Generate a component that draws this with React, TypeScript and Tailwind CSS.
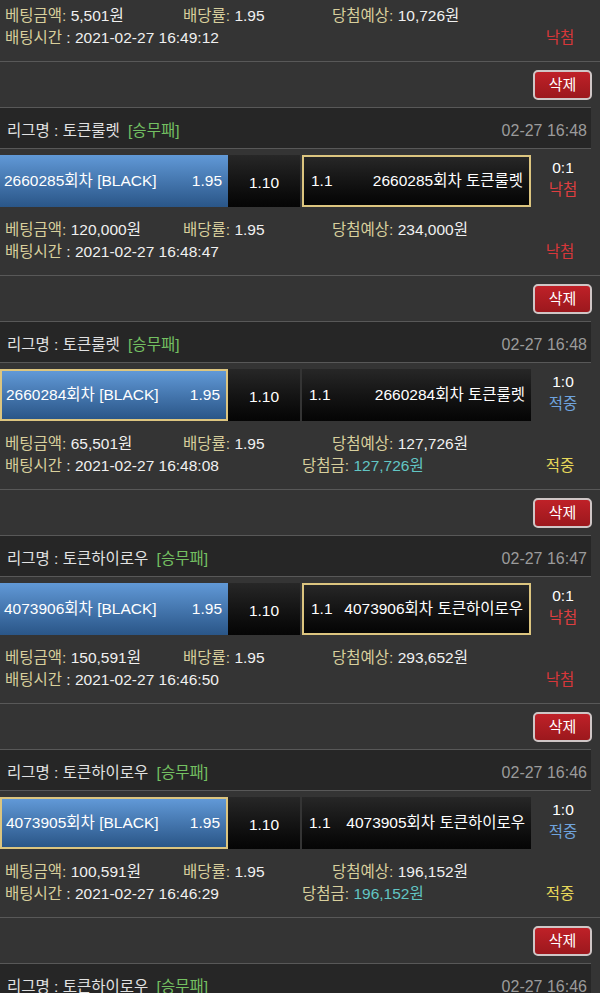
import React from 'react';

type Bet = {
  league?: string;
  time?: string;
  round?: string;
  pick?: 'home' | 'away';
  score?: string;
  win: boolean;
  amount: string;
  expect: string;
  betTime: string;
  prize?: string;
};

const bets: Bet[] = [
  { win: false, amount: '5,501원', expect: '10,726원', betTime: '2021-02-27 16:49:12' },
  {
    league: '토큰룰렛', time: '02-27 16:48', round: '2660285', pick: 'away', score: '0:1',
    win: false, amount: '120,000원', expect: '234,000원', betTime: '2021-02-27 16:48:47',
  },
  {
    league: '토큰룰렛', time: '02-27 16:48', round: '2660284', pick: 'home', score: '1:0',
    win: true, amount: '65,501원', expect: '127,726원', betTime: '2021-02-27 16:48:08', prize: '127,726원',
  },
  {
    league: '토큰하이로우', time: '02-27 16:47', round: '4073906', pick: 'away', score: '0:1',
    win: false, amount: '150,591원', expect: '293,652원', betTime: '2021-02-27 16:46:50',
  },
  {
    league: '토큰하이로우', time: '02-27 16:46', round: '4073905', pick: 'home', score: '1:0',
    win: true, amount: '100,591원', expect: '196,152원', betTime: '2021-02-27 16:46:29', prize: '196,152원',
  },
  {
    league: '토큰하이로우', time: '02-27 16:46', round: '4073904', pick: 'home', score: '1:0',
    win: true, amount: '100,000원', expect: '195,000원', betTime: '2021-02-27 16:46:08', prize: '195,000원',
  },
];

const Info = ({ bet }: { bet: Bet }) => (
  <div className="h-[68px] pl-[5px] pr-[5px] pt-[12px]">
    <div className="flex h-[22px] items-center">
      <span className="w-[178px]">
        <span className="text-[#d8cf9c]">베팅금액:</span> {bet.amount}
      </span>
      <span className="w-[149px]">
        <span className="text-[#d8cf9c]">배당률:</span> 1.95
      </span>
      <span>
        <span className="text-[#d8cf9c]">당첨예상:</span> {bet.expect}
      </span>
    </div>
    <div className="flex h-[22px] items-center">
      <span className="w-[297px]">
        <span className="text-[#d8cf9c]">배팅시간</span> : {bet.betTime}
      </span>
      {bet.prize && (
        <span>
          <span className="text-[#d8cf9c]">당첨금:</span>{' '}
          <span className="text-[#62c6c4]">{bet.prize}</span>
        </span>
      )}
      <span className={`ml-auto w-[70px] text-center ${bet.win ? 'text-[#e6d75a]' : 'text-[#d8373a]'}`}>
        {bet.win ? '적중' : '낙첨'}
      </span>
    </div>
  </div>
);

const DeleteBar = () => (
  <div className="flex h-[46px] justify-end border-t border-[#585858] pr-[8px] pt-[8px]">
    <button className="h-[30px] w-[59px] rounded-[5px] border-2 border-[#cfc6c6] bg-gradient-to-b from-[#bf2128] to-[#9c181d] text-[15px] text-white">
      삭제
    </button>
  </div>
);

const BetBlock = ({ bet }: { bet: Bet }) => {
  const home = bet.pick === 'home';
  return (
    <div>
      {/* 리그 헤더 */}
      <div className="flex h-[42px] w-[591px] items-center justify-between border-y border-[#585858] bg-[#262626] pl-[7px] pr-[4px] pt-[6px]">
        <div className="text-[#e2e2e2]">
          리그명 : {bet.league} <span className="ml-[4px] text-[#74c062]">[승무패]</span>
        </div>
        <div className="text-[16px] text-[#9b9b9b]">{bet.time}</div>
      </div>

      {/* 배팅 라인 */}
      <div className="flex pt-[6px]">
        <div
          className={`flex h-[52px] w-[228px] items-center justify-between bg-gradient-to-b from-[#6199d7] to-[#2a5688] pl-[4px] pr-[6px] text-white ${
            home ? 'border-2 border-[#dcc57f]' : ''
          }`}
        >
          <span>{bet.round}회차 [BLACK]</span>
          <span>1.95</span>
        </div>
        <div className="flex h-[52px] w-[72px] items-center justify-center bg-gradient-to-b from-[#272727] to-[#050505] pt-[3px] text-white">
          1.10
        </div>
        <div
          className={`ml-[2px] flex h-[52px] w-[229px] items-center justify-between bg-gradient-to-b from-[#272727] to-[#050505] pl-[7px] pr-[6px] text-white ${
            home ? '' : 'border-2 border-[#dcc57f]'
          }`}
        >
          <span>1.1</span>
          <span>
            {bet.round}회차 {bet.league}
          </span>
        </div>
        <div className="flex w-[64px] flex-col items-center pt-[2px] leading-[22px]">
          <span className="text-white">{bet.score}</span>
          <span className={bet.win ? 'text-[#6fa3dd]' : 'text-[#df3f40]'}>{bet.win ? '적중' : '낙첨'}</span>
        </div>
      </div>

      <Info bet={bet} />
      <DeleteBar />
    </div>
  );
};

export default function App() {
  return (
    <div
      className="h-[993px] w-[600px] overflow-hidden bg-[#343434] text-[15.5px] text-[#f0f0f0]"
      style={{ fontFamily: '"Liberation Sans", "Noto Sans CJK KR", sans-serif' }}
    >
      <div className="-mt-[7px]">
        <Info bet={bets[0]} />
        <DeleteBar />
        {bets.slice(1).map((b, i) => (
          <BetBlock key={i} bet={b} />
        ))}
      </div>
    </div>
  );
}
